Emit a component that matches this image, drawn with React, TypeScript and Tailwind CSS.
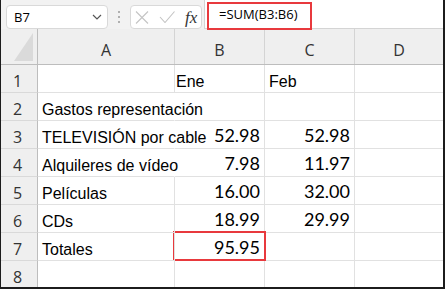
const sans = "font-['Liberation_Sans',Arial,sans-serif]";
const ui = "font-['Open_Sans','Noto_Sans',sans-serif]";
const num = "font-['Lato','Liberation_Sans',sans-serif]";

type Row = {
  n: number;
  a?: string;
  b?: string;
  c?: string;
  bText?: boolean;
  spill?: boolean;
};

const rows: Row[] = [
  { n: 1, b: "Ene", c: "Feb", bText: true },
  { n: 2, a: "Gastos representación", spill: true },
  { n: 3, a: "TELEVISIÓN por cable", b: "52.98", c: "52.98", spill: true },
  { n: 4, a: "Alquileres de vídeo", b: "7.98", c: "11.97", spill: true },
  { n: 5, a: "Películas", b: "16.00", c: "32.00" },
  { n: 6, a: "CDs", b: "18.99", c: "29.99" },
  { n: 7, a: "Totales", b: "95.95" },
  { n: 8 },
];

function Toolbar() {
  return (
    <div className="flex h-[29px] shrink-0 bg-[#f2f2f2]">
      <div className="ml-[5px] mt-[5px] flex h-[24px] w-[102px] items-center justify-between rounded-[4px] border border-[#d9d9d9] bg-white pl-[7px] pr-[5px]">
        <span className={`${ui} text-[13px] leading-none text-black`}>B7</span>
        <svg width="10" height="6" viewBox="0 0 10 6" fill="none">
          <path d="M1 1l4 4 4-4" stroke="#555" strokeWidth="1.2" />
        </svg>
      </div>
      <div className="flex w-[22px] flex-col items-center justify-center gap-[3px] pt-[4px]">
        <span className="size-[2px] rounded-full bg-[#9a9a9a]" />
        <span className="size-[2px] rounded-full bg-[#9a9a9a]" />
        <span className="size-[2px] rounded-full bg-[#9a9a9a]" />
      </div>
      <div className="mt-[5px] flex h-[24px] w-[72px] items-center rounded-[4px] border border-[#d9d9d9] bg-white pl-[4px]">
        <svg width="14" height="13" viewBox="0 0 14 13" fill="none">
          <path d="M1 0.5l12 12M13 0.5l-12 12" stroke="#c4c4c4" strokeWidth="1.1" />
        </svg>
        <svg className="ml-[10px]" width="16" height="12" viewBox="0 0 16 12" fill="none">
          <path d="M1 6l5 5.5L15.5 0.5" stroke="#c4c4c4" strokeWidth="1.1" />
        </svg>
        <span className="ml-[10px] font-['Liberation_Serif',serif] text-[17px] italic leading-none text-[#333]">fx</span>
      </div>
      <div className="relative ml-[2px] flex h-[29px] flex-1 items-center border-b border-l border-[#d4d4d4] bg-white pl-[14px]">
        <span className={`${ui} text-[13px] leading-none text-black`}>=SUM(B3:B6)</span>
        <div className="absolute left-[2px] top-[2px] h-[28px] w-[105px] border-2 border-[#e8393d]" />
      </div>
    </div>
  );
}

function HeaderRow() {
  const cols = [
    { l: "A", w: "w-[137px]" },
    { l: "B", w: "w-[90px]" },
    { l: "C", w: "w-[90px]" },
    { l: "D", w: "flex-1" },
  ];
  return (
    <div className="flex h-[36px] shrink-0 border-b border-[#bdbdbd] bg-[#efefef]">
      <div className="flex w-[37px] shrink-0 items-end justify-end border-r border-[#bdbdbd] pb-[3px] pr-[3px]">
        <svg width="20" height="28" viewBox="0 0 20 28">
          <path d="M19 0L19 28L0 28Z" fill="#dadada" />
        </svg>
      </div>
      {cols.map((c) => (
        <div
          key={c.l}
          className={`${c.w} ${ui} shrink-0 pt-[11px] text-center text-[16px] leading-[20px] text-[#333] ${c.l !== "D" ? "border-r border-[#d4d4d4]" : ""}`}
        >
          {c.l}
        </div>
      ))}
    </div>
  );
}

function SheetRow({ r }: { r: Row }) {
  return (
    <div className="flex h-[28px] shrink-0">
      <div className={`${ui} flex w-[37px] shrink-0 items-end justify-center border-b border-r border-b-[#d9d9d9] border-r-[#bdbdbd] bg-[#efefef] pb-[1px] pr-[3px] text-[16px] leading-[20px] text-[#333]`}>
        {r.n}
      </div>
      <div className={`relative z-10 flex w-[137px] shrink-0 items-end border-b border-[#e1e1e1] pb-[1px] pl-[4px] ${r.spill ? "border-r-transparent" : ""} border-r`}>
        <span className={`${sans} whitespace-nowrap text-[16px] leading-[18px] text-black`}>{r.a}</span>
      </div>
      <div className="relative flex w-[90px] shrink-0 items-end border-b border-r border-[#e1e1e1]">
        {r.bText ? (
          <span className={`${sans} pb-[1px] pl-[1px] text-[16px] leading-[18px] text-black`}>{r.b}</span>
        ) : (
          <span className={`${num} ml-auto pb-[3px] pr-[4px] text-[18px] leading-[20px] text-black`}>{r.b}</span>
        )}
        {r.n === 7 && <div className="absolute -left-[2px] -top-[2px] h-[30px] w-[93px] border-2 border-[#e8393d]" />}
      </div>
      <div className="flex w-[90px] shrink-0 items-end border-b border-r border-[#e1e1e1]">
        {r.bText ? (
          <span className={`${sans} pb-[1px] pl-[4px] text-[16px] leading-[18px] text-black`}>{r.c}</span>
        ) : (
          <span className={`${num} ml-auto pb-[3px] pr-[4px] text-[18px] leading-[20px] text-black`}>{r.c}</span>
        )}
      </div>
      <div className="flex-1 border-b border-[#e1e1e1]" />
    </div>
  );
}

export default function App() {
  return (
    <div className="flex h-[289px] w-[445px] flex-col overflow-hidden border-b-2 border-l border-r-2 border-[#1c1c1c] bg-white">
      <Toolbar />
      <HeaderRow />
      {rows.map((r) => (
        <SheetRow key={r.n} r={r} />
      ))}
    </div>
  );
}
